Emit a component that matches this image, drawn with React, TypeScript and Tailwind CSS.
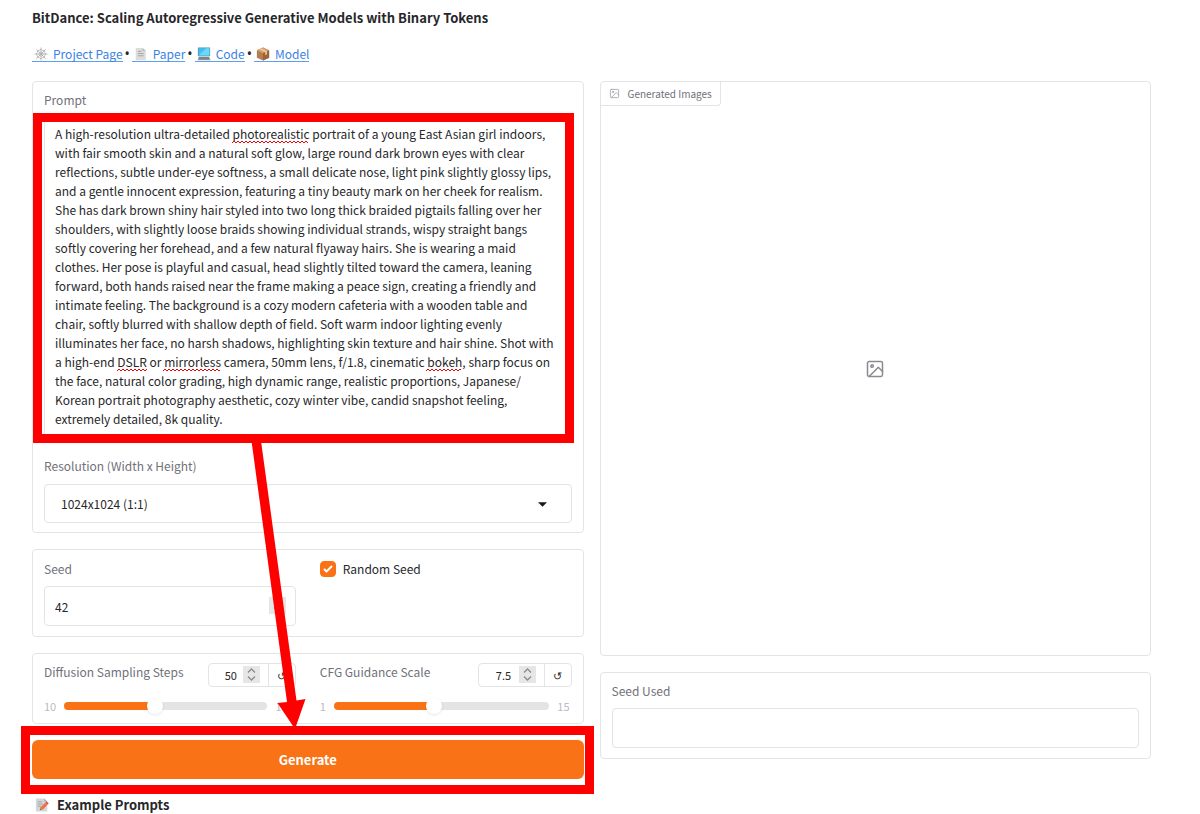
import { useState } from "react";
import type { ReactNode } from "react";

const PROMPT =
  "A high-resolution ultra-detailed photorealistic portrait of a young East Asian girl indoors, with fair smooth skin and a natural soft glow, large round dark brown eyes with clear reflections, subtle under-eye softness, a small delicate nose, light pink slightly glossy lips, and a gentle innocent expression, featuring a tiny beauty mark on her cheek for realism. She has dark brown shiny hair styled into two long thick braided pigtails falling over her shoulders, with slightly loose braids showing individual strands, wispy straight bangs softly covering her forehead, and a few natural flyaway hairs. She is wearing a maid clothes. Her pose is playful and casual, head slightly tilted toward the camera, leaning forward, both hands raised near the frame making a peace sign, creating a friendly and intimate feeling. The background is a cozy modern cafeteria with a wooden table and chair, softly blurred with shallow depth of field. Soft warm indoor lighting evenly illuminates her face, no harsh shadows, highlighting skin texture and hair shine. Shot with a high-end DSLR or mirrorless camera, 50mm lens, f/1.8, cinematic bokeh, sharp focus on the face, natural color grading, high dynamic range, realistic proportions, Japanese/\u200bKorean portrait photography aesthetic, cozy winter vibe, candid snapshot feeling, extremely detailed, 8k quality.";

function ImageIcon({ className }: { className: string }) {
  return (
    <svg viewBox="0 0 24 24" className={className} fill="none" stroke="currentColor" strokeWidth="1.8" strokeLinecap="round" strokeLinejoin="round" aria-hidden="true">
      <rect x="3" y="3" width="18" height="18" rx="2" />
      <circle cx="8.5" cy="8.5" r="1.5" />
      <path d="M21 15l-5-5L5 21" />
    </svg>
  );
}

function WebIcon() {
  return (
    <svg viewBox="0 0 16 16" className="size-3.5" fill="none" stroke="#a8a8a8" strokeWidth="0.8" aria-hidden="true">
      <path d="M8 0.500v15M0.500 8h15M2.500 2.500l11 11M13.500 2.500l-11 11" />
      <path d="M8 5.500L9.800 6.200 10.500 8 9.800 9.800 8 10.500 6.200 9.800 5.500 8 6.200 6.200Z" />
      <path d="M8 2.500Q9.500 4 11.800 4.200Q12 6.500 13.500 8Q12 9.500 11.800 11.800Q9.500 12 8 13.500Q6.500 12 4.200 11.800Q4 9.500 2.500 8Q4 6.500 4.200 4.200Q6.500 4 8 2.500Z" />
    </svg>
  );
}

function PageIcon() {
  return (
    <svg viewBox="0 0 16 16" className="size-3.5" aria-hidden="true">
      <path d="M2 1h8l3.500 3.500V15H2Z" fill="#dcdcdc" />
      <path d="M10 1v3.500h3.500Z" fill="#b8b8b8" />
      <path d="M4.500 5h4M4.500 7.500h6.500M4.500 10h6.500" stroke="#9f9f9f" />
    </svg>
  );
}

function ComputerIcon() {
  return (
    <svg viewBox="0 0 16 16" className="size-3.5" aria-hidden="true">
      <rect x="1" y="0.500" width="14" height="10" rx="0.600" fill="#4b8fae" />
      <rect x="1.800" y="1.300" width="12.400" height="8.400" fill="#43bdf0" />
      <path d="M1.800 9.700L10.500 1.300h3.700v8.400Z" fill="#6fd6fa" />
      <path d="M2 11h12l1.500 4H0.500Z" fill="#9aa3a8" />
      <path d="M2.500 12.200h11M2.200 13.600h11.600" stroke="#5a6166" strokeWidth="0.700" />
    </svg>
  );
}

function PackageIcon() {
  return (
    <svg viewBox="0 0 16 16" className="size-3.5" aria-hidden="true">
      <path d="M8 0.500l7 3.300v8.400L8 15.500 1 12.200V3.800Z" fill="#b77c4d" />
      <path d="M8 0.500l7 3.300L8 7.200 1 3.800Z" fill="#d6a273" />
      <path d="M8 7.200l7-3.400v8.400L8 15.500Z" fill="#9a6438" />
      <path d="M3.800 2.500l6.800 3.400v3.400l2-1V4.900L5.800 1.500Z" fill="#e9c7a0" />
    </svg>
  );
}

function MemoIcon() {
  return (
    <svg viewBox="0 0 16 16" className="size-3.5" aria-hidden="true">
      <path d="M1 0.500h9.500L14 4v11.500H1Z" fill="#d3d6da" />
      <path d="M10.500 0.500V4H14Z" fill="#a9adb2" />
      <path d="M3 4.500h5M3 7h6M3 9.500h4" stroke="#9ca1a6" />
      <path d="M5.500 14l1-3.500 5.500-5.500 2.500 2.500-5.500 5.500Z" fill="#f0713c" />
      <path d="M12 5l1.200-1.200 2.500 2.500-1.200 1.200Z" fill="#d8485c" />
      <path d="M5.500 14l.5-1.500 1 1Z" fill="#444" />
    </svg>
  );
}

function IconLink({ icon, children }: { icon: ReactNode; children: ReactNode }) {
  return (
    <a href="#" className="inline-flex h-[15px] items-center gap-[5px] border-b border-[#5f9fee] pl-[2px] leading-[14px] text-[#3b82e6]">
      {icon}
      {children}
    </a>
  );
}

function Bullet() {
  return <span className="font-['Noto_Sans',sans-serif] text-sm" aria-hidden="true">•</span>;
}

function Squiggle({ className }: { className: string }) {
  return (
    <svg className={`pointer-events-none absolute h-1 ${className}`} aria-hidden="true">
      <defs>
        <pattern id="wave" width="4" height="4" patternUnits="userSpaceOnUse">
          <path d="M-1 2L0 3L2 1L4 3L5 2" fill="none" stroke="#f00000" />
        </pattern>
      </defs>
      <rect width="100%" height="4" fill="url(#wave)" />
    </svg>
  );
}

function Stepper({ className }: { className: string }) {
  return (
    <svg viewBox="0 0 17 17" className={`pointer-events-none absolute size-[17px] ${className}`} aria-hidden="true">
      <rect width="17" height="17" fill="#e6e6e6" />
      <path d="M5 6.500L8.500 3l3.500 3.500M5 10.500L8.500 14l3.500-3.500" fill="none" stroke="#8c8c8c" strokeWidth="1.300" />
    </svg>
  );
}

const thumb =
  "[&::-webkit-slider-thumb]:size-4 [&::-webkit-slider-thumb]:appearance-none [&::-webkit-slider-thumb]:rounded-full [&::-webkit-slider-thumb]:bg-white [&::-webkit-slider-thumb]:shadow-[0_1px_3px_rgba(0,0,0,0.1)]";

function Slider({ id, label, min, max, step, initial }: { id: string; label: string; min: number; max: number; step: number; initial: number }) {
  const [value, setValue] = useState(initial);
  const percent = ((value - min) / (max - min)) * 100;
  return (
    <div className="min-w-0 flex-1">
      <div className="flex items-start justify-between">
        <label htmlFor={id} className="leading-[18px] text-[#71717a]">{label}</label>
        <div className="flex h-6 rounded-sm border border-[#e4e4e7]">
          <div className={`relative ${step < 1 ? "w-[65px]" : "w-[59px]"}`}>
            <input
              type="number"
              aria-label={`${label} value`}
              value={value}
              min={min}
              max={max}
              step={step}
              onChange={(e) => setValue(Number(e.target.value))}
              className="h-full w-full px-2 text-center text-[11px] text-[#27272a] outline-none [&::-webkit-inner-spin-button]:opacity-100"
            />
            <Stepper className="top-[2px] right-2" />
          </div>
          <button type="button" aria-label={`Reset ${label}`} onClick={() => setValue(initial)} className="w-[27px] border-l border-[#e4e4e7] text-[11px] leading-5">
            ↺
          </button>
        </div>
      </div>
      <div className="mt-[9px] flex items-center gap-2 pr-[2px] text-[11px] leading-5 text-[#bbbbc2]">
        <span>{min}</span>
        <input
          id={id}
          type="range"
          min={min}
          max={max}
          step={step}
          value={value}
          onChange={(e) => setValue(Number(e.target.value))}
          className={`h-2 min-w-0 flex-1 appearance-none rounded-full ${thumb}`}
          style={{ background: `linear-gradient(to right, #f97316 ${percent}%, #e4e4e4 ${percent}%)` }}
        />
        <span>{max}</span>
      </div>
    </div>
  );
}

const panel = "rounded-sm border border-[#e4e4e7] px-[11px]";
const field = "block w-full rounded-sm border border-[#e4e4e7] bg-white outline-none";
const fieldLabel = "block leading-4 text-[#71717a]";

export default function App() {
  const [prompt, setPrompt] = useState(PROMPT);
  return (
    <main className="bg-white pt-2 pr-[49px] pl-8 font-['Noto_Sans_CJK_SC','Noto_Sans',sans-serif] text-xs leading-5 text-[#27272a]">
      <h1 className="text-[13px] leading-5 font-bold">BitDance: Scaling Autoregressive Generative Models with Binary Tokens</h1>
      <nav className="mt-4 flex h-5 items-center gap-[2px]">
        <IconLink icon={<WebIcon />}>Project Page</IconLink>
        <Bullet />
        <IconLink icon={<PageIcon />}>Paper</IconLink>
        <Bullet />
        <IconLink icon={<ComputerIcon />}>Code</IconLink>
        <Bullet />
        <IconLink icon={<PackageIcon />}>Model</IconLink>
      </nav>

      <div className="mt-[17px] grid grid-cols-2 items-start gap-4">
        <div className="relative flex flex-col gap-4">
          <section className={`${panel} pt-[10px] pb-[9px]`}>
            <label htmlFor="prompt" className={fieldLabel}>Prompt</label>
            <div className="relative mt-[10px]">
              <textarea
                id="prompt"
                value={prompt}
                spellCheck={false}
                onChange={(e) => setPrompt(e.target.value)}
                className={`${field} h-80 resize-none overflow-hidden px-[10px] py-[5px] leading-[19px]`}
              />
              <Squiggle className="top-[22px] left-[188px] w-[76px]" />
              <Squiggle className="top-[250px] left-[73px] w-[30px]" />
              <Squiggle className="top-[250px] left-[119px] w-[57px]" />
              <Squiggle className="top-[250px] left-[382px] w-[35px]" />
              <div className="pointer-events-none absolute -top-[5px] -right-[2px] -bottom-[5px] -left-[11px] border-9 border-[#ff0000]" />
            </div>
            <label htmlFor="resolution" className={`mt-5 ${fieldLabel}`}>Resolution (Width x Height)</label>
            <div className="relative mt-[10px]">
              <select id="resolution" className={`${field} h-[39px] appearance-none px-4`}>
                <option>1024x1024 (1:1)</option>
              </select>
              <svg viewBox="0 0 10 5" className="pointer-events-none absolute top-[18px] right-[25px] h-[5px] w-[9px]" aria-hidden="true">
                <path d="M0 0h10L5 5Z" fill="#18181b" />
              </svg>
            </div>
          </section>

          <section className={`${panel} flex items-start gap-6 pt-[11px] pb-[10px]`}>
            <div className="min-w-0 flex-1">
              <label htmlFor="seed" className={fieldLabel}>Seed</label>
              <div className="relative mt-[9px]">
                <input id="seed" type="number" defaultValue={42} className={`${field} h-10 px-[10px]`} />
                <Stepper className="top-[11px] right-[10px]" />
              </div>
            </div>
            <label className="flex flex-1 items-center gap-[7px] leading-4">
              <span className="relative flex size-4">
                <input type="checkbox" defaultChecked className="peer size-4 appearance-none rounded-sm border border-[#d4d4d8] checked:border-[#f97316] checked:bg-[#f97316]" />
                <svg viewBox="0 0 16 16" className="pointer-events-none absolute inset-0 hidden size-4 peer-checked:block" fill="white" aria-hidden="true">
                  <path d="M12.207 4.793a1 1 0 010 1.414l-5 5a1 1 0 01-1.414 0l-2-2a1 1 0 011.414-1.414L6.500 9.086l4.293-4.293a1 1 0 011.414 0z" />
                </svg>
              </span>
              Random Seed
            </label>
          </section>

          <section className={`${panel} flex gap-6 pt-[9px] pb-[7px]`}>
            <Slider id="steps" label="Diffusion Sampling Steps" min={10} max={100} step={1} initial={50} />
            <Slider id="cfg" label="CFG Guidance Scale" min={1} max={15} step={0.5} initial={7.5} />
          </section>

          <div className="relative">
            <button type="button" className="block h-[39px] w-full rounded-md bg-[#f97316] text-[13px] font-bold text-white">Generate</button>
            <div className="pointer-events-none absolute -top-[14px] -right-[10px] -bottom-[15px] -left-[11px] border-9 border-[#ff0000]" />
          </div>

          <svg viewBox="0 0 552 698" className="pointer-events-none absolute top-0 left-0 h-[698px] w-[552px]" aria-hidden="true">
            <path d="M219.500 360L229 360L264.500 619.500L273.500 618L263 648L245.500 622L255 621Z" fill="#ff0000" />
          </svg>
        </div>

        <div className="flex flex-col gap-4">
          <section className="flex h-[575px] flex-col rounded-sm border border-[#e4e4e7]">
            <h2 className="flex h-6 items-center gap-2 self-start rounded-br-sm border-r border-b border-[#e4e4e7] px-2 text-[10px] text-[#71717a]">
              <ImageIcon className="size-[11px] text-[#a1a1aa]" />
              Generated Images
            </h2>
            <div className="mb-6 flex flex-1 items-center justify-center">
              <ImageIcon className="size-5 text-[#8a8a92]" />
            </div>
          </section>
          <section className={`${panel} py-[10px]`}>
            <label htmlFor="used" className={fieldLabel}>Seed Used</label>
            <input id="used" type="text" readOnly className={`${field} mt-[9px] h-10 px-[10px]`} />
          </section>
        </div>
      </div>
      <h2 className="mt-4 flex items-center gap-2 pl-[3px] text-[13px] leading-5 font-bold">
        <MemoIcon />
        Example Prompts
      </h2>
    </main>
  );
}
